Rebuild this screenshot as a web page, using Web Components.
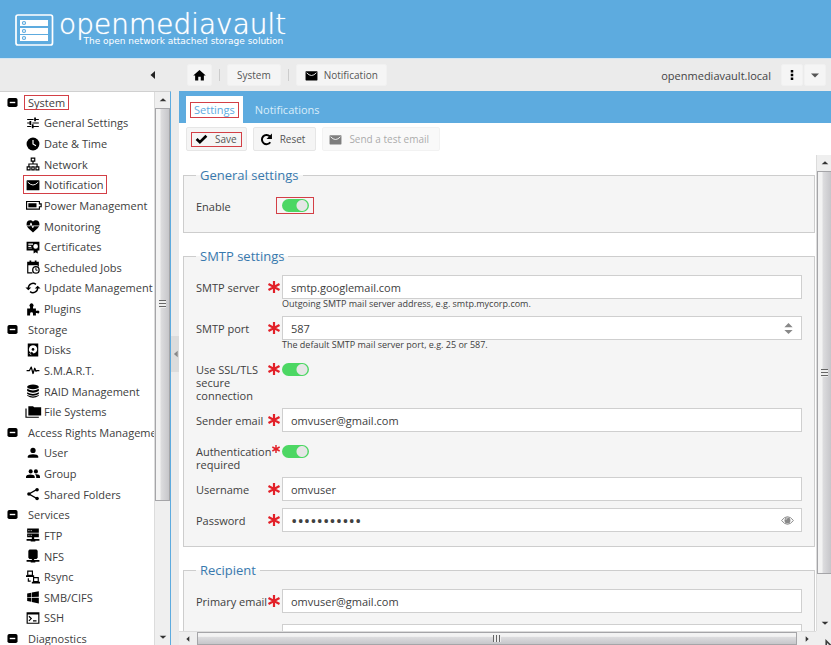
<!DOCTYPE html>
<html lang="en">
<head>
<meta charset="utf-8">
<title>openmediavault - Notification</title>
<style>
html, body { height: 100%; margin: 0; }
body { font: 11px/13px "Open Sans", sans-serif; color: #404040; background: #fff; overflow: hidden; }
</style>
</head>
<body>
<omv-app>
  <omv-header slot="header"></omv-header>
  <omv-bar slot="bar"></omv-bar>
  <omv-tree slot="tree">
    <omv-node root marked>System</omv-node>
    <omv-node icon="tune">General Settings</omv-node>
    <omv-node icon="clock">Date &amp; Time</omv-node>
    <omv-node icon="lan">Network</omv-node>
    <omv-node icon="mail" marked>Notification</omv-node>
    <omv-node icon="battery">Power Management</omv-node>
    <omv-node icon="heart">Monitoring</omv-node>
    <omv-node icon="cert">Certificates</omv-node>
    <omv-node icon="calendar">Scheduled Jobs</omv-node>
    <omv-node icon="sync">Update Management</omv-node>
    <omv-node icon="plugin">Plugins</omv-node>
    <omv-node root>Storage</omv-node>
    <omv-node icon="disk">Disks</omv-node>
    <omv-node icon="pulse">S.M.A.R.T.</omv-node>
    <omv-node icon="raid">RAID Management</omv-node>
    <omv-node icon="folders">File Systems</omv-node>
    <omv-node root>Access Rights Manageme</omv-node>
    <omv-node icon="user">User</omv-node>
    <omv-node icon="group">Group</omv-node>
    <omv-node icon="share">Shared Folders</omv-node>
    <omv-node root>Services</omv-node>
    <omv-node icon="ftp">FTP</omv-node>
    <omv-node icon="nfs">NFS</omv-node>
    <omv-node icon="rsync">Rsync</omv-node>
    <omv-node icon="windows">SMB/CIFS</omv-node>
    <omv-node icon="console">SSH</omv-node>
    <omv-node root>Diagnostics</omv-node>
  </omv-tree>
  <omv-tabs slot="tabs"></omv-tabs>
  <omv-actions slot="actions">
    <omv-button icon="check" marked>Save</omv-button>
    <omv-button icon="reset">Reset</omv-button>
    <omv-button icon="mail" disabled>Send a test email</omv-button>
  </omv-actions>
  <omv-fieldset slot="form" label="General settings">
    <omv-field label="Enable" type="checkbox" marked></omv-field>
  </omv-fieldset>
  <omv-fieldset slot="form" label="SMTP settings">
    <omv-field label="SMTP server" required value="smtp.googlemail.com" hint="Outgoing SMTP mail server address, e.g. smtp.mycorp.com."></omv-field>
    <omv-field label="SMTP port" required type="number" value="587" hint="The default SMTP mail server port, e.g. 25 or 587."></omv-field>
    <omv-field label="Use SSL/TLS secure connection" required type="checkbox"></omv-field>
    <omv-field label="Sender email" required value="omvuser@gmail.com"></omv-field>
    <omv-field label="Authentication required" required="small" type="checkbox"></omv-field>
    <omv-field label="Username" required value="omvuser"></omv-field>
    <omv-field label="Password" required type="password" value="openmediava"></omv-field>
  </omv-fieldset>
  <omv-fieldset slot="form" label="Recipient" style="--gap: 11px">
    <omv-field label="Primary email" required value="omvuser@gmail.com"></omv-field>
    <omv-field label="Secondary email" value=""></omv-field>
  </omv-fieldset>
</omv-app>

<script>
const ICONS = {
  home: '<path d="M10 20v-6h4v6h5v-8h3L12 3 2 12h3v8z"/>',
  mail: '<rect x="1" y="4" width="22" height="17" rx="1"/><path d="M3 7q9 10 18 0" fill="none" stroke="#fff" stroke-width="1.6"/>',
  tune: '<path d="M2 17v2h7v-2zM2 5v2h11V5zm11 16v-2h9v-2h-9v-3h-3v7zM6 8.500v2.500H2v2h4v2.500h3v-7zM22 13v-2H11v2zM14 9h3V7h5V5h-5V2.500h-3z"/>',
  clock: '<circle cx="12" cy="12" r="11"/><path d="M12 5v7l5 3" fill="none" stroke="#fff" stroke-width="2"/>',
  lan: '<path d="M8 1h8v7h-3v3h7v5h3v7h-7v-7h2v-3H6v3h2v7H1v-7h3v-5h7V8H8zm2 2v3h4V3zM3 18v3h3v-3zm15 0v3h3v-3z" fill-rule="evenodd"/><path d="M9 16h6v7H9zm2 2v3h2v-3z" fill-rule="evenodd"/>',
  battery: '<path d="M0 5h24v4h3v7h-3v4H0zm2 2v11h20v-4h3v-3h-3V7z" fill-rule="evenodd"/><path d="M4 9h14v7H4z"/>',
  heart: '<path d="M7.500 2A6.500 6.500 0 0 0 1 8.500V11h5.300l1.270-4c.3-.8 1.480-.88 1.860 0l2.070 6 .59-1.420c.13-.33.48-.58.910-.58H23V8.500A6.500 6.500 0 0 0 16.500 2C14.640 2 13 3 12 4.500 11 3 9.360 2 7.500 2M1.500 12.500L4 16l8 7 8-7 2.500-3.500h-9.100l-.93 2.300c-.4 1.010-1.550.87-1.920-.03L8.500 9.500l-.96 2.330c-.15.38-.49.67-.94.67z"/>',
  cert: '<path d="M1 3h22v15h-3v5l-3.500-2-3.500 2v-5H1zm3 3v2h8V6zm0 4v2h5v-2zm12.500-3a4 4 0 1 0 0 8 4 4 0 0 0 0-8z" fill-rule="evenodd"/><path d="M4 14h6" stroke="#fff"/>',
  calendar: '<path d="M6 1v2H2v20h9v-2H4V9h16v2h2V3h-4V1h-3v2H9V1z"/><circle cx="17" cy="17" r="5.500" fill="#fff" stroke="currentColor" stroke-width="2.200"/><path d="M17 13v4.500h3" fill="none" stroke="currentColor" stroke-width="1.600"/>',
  sync: '<path d="M4 12a8 8 0 0 1 13-6.200M20 12a8 8 0 0 1-13 6.200" fill="none" stroke="currentColor" stroke-width="2.400"/><path d="M-1 11h10l-5 5zM15 13h10l-5-5z"/>',
  plugin: '<path d="M2 11h5V8.500a3.500 3.500 0 1 1 5 0V11h5v4h2a2.500 2.500 0 1 1 0 4h-2v4h-5v-3a2.500 2.500 0 0 0-5 0v3H2z"/>',
  disk: '<path d="M3 1h18v22H3zm9 3a7 7 0 0 0-4 12.700L10 15l3 3c9-2 8-14-1-14z" fill-rule="evenodd"/><circle cx="12" cy="11" r="2.300"/><path d="M6 18l3 2" stroke="#fff" stroke-width="1.500"/>',
  pulse: '<path d="M1 13h5l3-6 3 11 3-9 2 5 2-1h4" fill="none" stroke="currentColor" stroke-width="2.200" stroke-linejoin="round"/>',
  raid: '<ellipse cx="12" cy="5" rx="10" ry="4"/><path d="M2 8q10 6 20 0v4q-10 6-20 0zM2 14q10 6 20 0v3q-10 6-20 0zM2 19q10 5 20 0v1q-10 7-20 0z"/>',
  folders: '<path d="M26 4H14l-2-2H4v16h22zM1 6h-2v16h23v-2H1z"/>',
  user: '<circle cx="12" cy="7.500" r="4.500"/><path d="M3 20v-2c0-5 18-5 18 0v2z"/>',
  group: '<circle cx="8" cy="7.500" r="3.500"/><circle cx="17" cy="7.500" r="3.500"/><path d="M0 19v-2.500c0-5 15-5 15 0V19zM15.500 12.700q2 1.500 2 3.800V19H24v-2.500c0-3-4-4.500-8.500-3.800z"/>',
  share: '<path d="M19 4L5 12l14 8" fill="none" stroke="currentColor" stroke-width="2.200"/><circle cx="19" cy="4.500" r="3"/><circle cx="5" cy="12" r="3"/><circle cx="19" cy="19.500" r="3"/>',
  ftp: '<path d="M2 1h20v7H2zM2 9.500h20V16h-8v3h9v3h-7v1H8v-1H1v-3h9v-3H2z"/><path d="M4 4.500h2m2 0h2M4 12.500h2m2 0h2" stroke="#fff" stroke-width="1.300"/>',
  nfs: '<path d="M6 1h12l2 2v12l-2 2h-4v2h9v3h-7v1H8v-1H1v-3h9v-2H6l-2-2V3z"/>',
  rsync: '<path d="M2 1h10v8h2v3H0V9h2zm2 2v5h6V3zM12 12h10v8h2v3H10v-3h2zm2 2v5h6v-5z" fill-rule="evenodd"/><path d="M4 14v5h4" fill="none" stroke="currentColor" stroke-width="2"/>',
  windows: '<path d="M2 12V6l7-1.500v7.400zM22 2v9.750l-12 .15V4.300zM2 13l7 .1v7.200L2 19zm20 .2V23l-12-2.500v-7.400z"/>',
  console: '<path d="M1 2h22v20H1zm2 4v14h18V6z" fill-rule="evenodd"/><path d="M5 9l4 4-4 4m7 0h6" fill="none" stroke="currentColor" stroke-width="2"/>',
  check: '<path d="M3 11l6 6L21 5" fill="none" stroke="currentColor" stroke-width="5"/>',
  reset: '<path d="M19 17a8.500 8.500 0 1 1-1-11" fill="none" stroke="currentColor" stroke-width="3.600"/><path d="M22 1v10H12z"/>',
  dots: '<path d="M9 0h6v6H9zM9 9h6v6H9zM9 18h6v6H9z"/>',
  caret: '<path d="M4 9h16l-8 8z"/>',
  left: '<path d="M16 4v16L7 12z"/>',
  right: '<path d="M8 4v16l9-8z"/>',
  up: '<path d="M2 16h20l-10-9z"/>',
  down: '<path d="M2 8h20l-10 9z"/>',
  minus: '<rect x="1" y="2" width="22" height="20" rx="4"/><path d="M6 12h12" stroke="#fff" stroke-width="3"/>',
  spin: '<path d="M3 9l9-9 9 9zM3 15l9 9 9-9z"/>',
  eye: '<path d="M1 12q11-14 22 0-11 14-22 0z" fill="none" stroke="currentColor" stroke-width="1.800"/><circle cx="12" cy="12" r="5.500"/><path d="M9 11q0-3 3-3" fill="none" stroke="#fff"/>',
  star: '<path d="M12 0v24M1 6l22 12M23 6L1 18" stroke="currentColor" stroke-width="4.400"/>',
  cursor: '<path d="M3 0v24h5l4-6h9z" fill="#fff" stroke="currentColor" stroke-width="4"/>'
};
const icon = (name, size = 14) =>
  `<svg class="i ${name}" width="${size}" height="${size}" viewBox="0 0 24 24" fill="currentColor" aria-hidden="true">${ICONS[name]}</svg>`;

const BASE = `<style>
*, :host { box-sizing: border-box; }
:host { display: block; }
svg.i { display: block; flex: none; overflow: visible; }
button, input { font: inherit; color: inherit; margin: 0; }
button { padding: 0; border: 0; background: none; }
a { color: inherit; text-decoration: none; }
</style>`;

function define(name, render) {
  customElements.define(name, class extends HTMLElement {
    connectedCallback() {
      if (this.shadowRoot) return;
      this.attachShadow({ mode: 'open' }).innerHTML = BASE + render(this);
    }
  });
}

define('omv-app', () => `<style>
:host { display: grid; height: 100vh; grid-template: auto auto minmax(0, 1fr) / 171px minmax(0, 1fr); grid-template-rows: auto minmax(0, 1fr); }
.top { grid-column: 1 / -1; }
.side { display: flex; min-height: 0; border-top: 1px solid #d0d0d0; border-right: 1px solid #5dabdf; }
.pane { display: flex; flex-direction: column; flex: 1; min-width: 0; min-height: 0; overflow: hidden; }
.right { display: flex; min-width: 0; min-height: 0; }
.split { display: flex; align-items: center; width: 8px; background: #ebebeb; padding-bottom: 28px; }
.split button { display: grid; place-items: center; width: 8px; height: 36px; background: #dcdcdc; color: #888; }
main { flex: 1; min-width: 0; display: flex; flex-direction: column; }
.view { flex: 1; min-height: 0; display: grid; grid-template: minmax(0, 1fr) 14px / minmax(0, 1fr) 15px; }
.form { display: flex; flex-direction: column; gap: 14px; overflow: hidden; padding: 11px 1px 0 4px; }
.corner { background: #efefef; position: relative; overflow: hidden; }
.corner svg { position: absolute; right: -4px; bottom: -6px; }
</style>
<div class="top"><slot name="header"></slot><slot name="bar"></slot></div>
<div class="side"><div class="pane"><slot name="tree"></slot></div><omv-scroll thumb="393" rest="129"></omv-scroll></div>
<div class="right">
  <div class="split"><button aria-label="Collapse navigation">${icon('left', 10)}</button></div>
  <main>
    <slot name="tabs"></slot><slot name="actions"></slot>
    <div class="view">
      <div class="form"><slot name="form"></slot></div>
      <omv-scroll thumb="403" rest="41"></omv-scroll>
      <omv-scroll horizontal thumb="596" rest="1"></omv-scroll>
      <div class="corner">${icon('cursor', 10)}</div>
    </div>
  </main>
</div>`);

define('omv-header', () => `<style>
:host { background: #5dabdf; color: #fff; height: 58px; padding: 14px 15px 0; }
.brand { display: flex; gap: 5px; }
.words { display: grid; justify-items: end; }
.name { font: 200 28px/22px "DejaVu Sans", sans-serif; text-shadow: 0 0 1px #fff; }
.tag { font: 9px/10px "DejaVu Sans", sans-serif; padding-right: 3px; }
</style>
<div class="brand">
<svg width="39" height="32" viewBox="0 0 39 32" fill="none" stroke="#fff" aria-hidden="true">
<rect x="1" y="1" width="36.500" height="30" rx="2" stroke-width="1.700"/>
<path d="M5 6h28v6H5zM5 14h28v6H5zM5 21h28v6H5z" fill="#fff" stroke="none"/>
<g stroke="#5dabdf" stroke-width="1.200"><circle cx="9" cy="9" r="1.500"/><circle cx="9" cy="17" r="1.500"/><circle cx="9" cy="24" r="1.500"/></g></svg>
<div class="words"><span class="name">openmediavault</span><span class="tag">The open network attached storage solution</span></div>
</div>`);

define('omv-bar', () => `<style>
:host { display: flex; align-items: center; height: 33px; padding: 0 5px 0 0; background: #ebebeb; border-top: 1px solid #d3e6f3; color: #555; }
.collapse { width: 187px; display: flex; justify-content: flex-end; padding-right: 28px; color: #222; }
i { width: 1px; height: 12px; background: #ccc; margin: 0 7px; }
.host { margin-left: auto; margin-right: 10px; color: #444; }
omv-button + omv-button { margin-left: 1px; }
</style>
<div class="collapse"><button aria-label="Collapse">${icon('left', 12)}</button></div>
<omv-button flat icon="home" size="15" label="Home"></omv-button><i></i>
<omv-button flat>System</omv-button><i></i>
<omv-button flat icon="mail">Notification</omv-button>
<span class="host">openmediavault.local</span>
<omv-button flat narrow icon="dots" size="10" label="More"></omv-button><omv-button flat narrow icon="caret" size="12" label="Menu"></omv-button>`);

define('omv-button', el => {
  const only = el.hasAttribute('label'), name = el.getAttribute('icon');
  return `<style>
button { display: flex; align-items: center; gap: 7px; height: 24px; padding: 0 10px 0 6px; font-size: 10px; justify-content: center;
  white-space: nowrap; background: #f5f5f5; border: 1px solid #e6e6e6; border-radius: 2px; color: #555; }
:host([flat]) button { height: 22px; padding: 0 ${only ? 0 : name ? 8 : 9}px; gap: 6px; border-color: #f1f1f1; min-width: ${only ? (el.hasAttribute('narrow') ? 22 : 25) : 0}px; }
:host([flat]:not([narrow])) svg, :host(:not([flat])) svg, .dots { color: #000; }
button:disabled { opacity: .5; }
span { display: flex; align-items: center; gap: inherit; }
b { font-weight: 400; }
:host([marked]) span { height: 15px; padding: 0 4px 0 3px; border: 1px solid #d33f46; }
:host([marked]) button { padding: 0 4px; }
</style>
<button ${el.hasAttribute('disabled') ? 'disabled' : ''} ${only ? `aria-label="${el.getAttribute('label')}"` : ''}><span>${name ? icon(name, +(el.getAttribute('size') || 13)) : ''}${only ? '' : '<b><slot></slot></b>'}</span></button>`;
});

define('omv-tree', () => `<style>
:host { flex: 1; display: flex; flex-direction: column; min-height: 0; margin-bottom: -4px; }
nav { flex: 1; display: flex; flex-direction: column; }
</style><nav aria-label="Main"><slot></slot></nav>`);

define('omv-node', el => {
  const root = el.hasAttribute('root');
  return `<style>
:host { flex: 1; display: flex; align-items: center; white-space: nowrap; padding-left: ${root ? 7 : 26}px; gap: ${root ? 10 : 0}px; min-height: 18px; }
a { display: flex; align-items: center; gap: 4px; height: ${root ? 14 : 17}px; }
:host([marked]) a { outline: 1px solid #d33f46; outline-offset: ${root ? 0 : 1}px; ${root ? 'height: 13px; padding: 0 3px; margin: 0 -3px;' : 'height: 15px; padding: 0 1px; margin: 0 -1px;'} }
svg { color: #000; }
</style>${root ? `<button aria-label="Collapse group">${icon('minus', 11)}</button>` : ''}
<a href="#">${root ? '' : icon(el.getAttribute('icon'), 14)}<span><slot></slot></span></a>`;
});

define('omv-tabs', () => `<style>
:host { display: flex; height: 32px; padding: 5px 7px 0; background: #5dabdf; }
button { padding: 0 4px; color: #d9edfa; margin-right: 4px; }
button[aria-selected=true] { background: #fff; color: #5dabdf; }
span { display: block; padding: 0 3px; border: 1px solid transparent; line-height: 14px; }
[aria-selected=true] span { border-color: #d33f46; }
</style><button role="tab" aria-selected="true"><span>Settings</span></button><button role="tab" aria-selected="false"><span>Notifications</span></button>`);

define('omv-actions', () => `<style>
:host { display: flex; gap: 6px; height: 32px; padding: 4px 7px; background: #fff; }
</style><slot></slot>`);

define('omv-fieldset', el => `<style>
:host { flex: none; }
fieldset { margin: 0; min-width: 0; border: 1px solid #cdcdcd; background: #f5f5f5; padding: 10px 12px 14px; }
legend { color: #3879ae; font-size: 13px; line-height: 18px; padding: 0 4px; }
div { display: flex; flex-direction: column; gap: var(--gap, 7px); }
</style><fieldset><legend>${el.getAttribute('label')}</legend><div><slot></slot></div></fieldset>`);

define('omv-field', el => {
  const type = el.getAttribute('type') || 'text', req = el.getAttribute('required'), hint = el.getAttribute('hint');
  const ctl = type === 'checkbox'
    ? '<span class="tog"><input id="f" type="checkbox" checked></span>'
    : `<div class="box"><input id="f" type="${type}" value="${el.getAttribute('value')}">${type === 'number' ? icon('spin', 11) : type === 'password' ? icon('eye', 13) : ''}</div>`;
  return `<style>
:host { display: grid; grid-template-columns: 86px minmax(0, 1fr); }
label { display: flex; padding: 6px 2px 0 0; margin-bottom: -1px; }
label span { flex: 1; min-width: 0; }
.star { color: #e22028; }
.box { display: flex; align-items: center; height: 24px; border: 1px solid #cfcfcf; background: #fff; padding-right: 7px; color: #404040; }
.box input { flex: 1; min-width: 0; border: 0; outline: 0; background: none; padding: 0 8px; height: 20px; appearance: textfield; }
.box input[type=password] { font-size: 17px; }
.box input::-webkit-inner-spin-button { appearance: none; display: none; }
.box svg { color: #888; }
.tog { display: flex; align-items: center; width: fit-content; height: 24px; }
.tog input { appearance: none; width: 27px; height: 13px; border-radius: 7px; background: radial-gradient(circle at 20px 50%, #e6e6e6 5px, #4cd763 6px); }
:host([marked]) .tog { height: 17px; margin: 3px 0 4px -6px; padding: 0 4px 0 5px; border: 1px solid #d33f46; }
small { display: block; font-size: 9px; line-height: 10px; }
</style><label for="f"><span>${el.getAttribute('label')}</span>${req === null ? '' : icon('star', req === 'small' ? 8 : 12)}</label>
<div>${ctl}${hint ? `<small>${hint}</small>` : ''}</div>`;
});

define('omv-scroll', el => {
  const h = el.hasAttribute('horizontal');
  return `<style>
:host { display: flex; flex-direction: ${h ? 'row' : 'column'}; ${h ? '' : 'width: 16px;'} background: #efefef; border-${h ? 'top' : 'left'}: 1px solid #dcdcdc; min-width: 0; min-height: 0; color: #333; }
button { display: grid; place-items: center; flex: 0 0 ${h ? 18 : 16}px; }
.t { flex: ${el.getAttribute('thumb')} 1 0; display: grid; place-items: center; border: 1px solid #a5a5a8; min-height: 0;
 background: linear-gradient(to ${h ? 'bottom' : 'right'}, #f3f3f3 0 30%, #dcdcde 40%, #c6c6ca); }
.r { flex: ${el.getAttribute('rest')} 1 0; }
.g { width: ${h ? 8 : 7}px; height: ${h ? 7 : 8}px; background: repeating-linear-gradient(to ${h ? 'right' : 'bottom'}, #666 0 1px, #eee 1px 3px); }
</style><button aria-label="Scroll back">${icon(h ? 'left' : 'up', 8)}</button><div class="t"><div class="g"></div></div><div class="r"></div><button aria-label="Scroll forward">${icon(h ? 'right' : 'down', 8)}</button>`;
});
</script>
</body>
</html>
